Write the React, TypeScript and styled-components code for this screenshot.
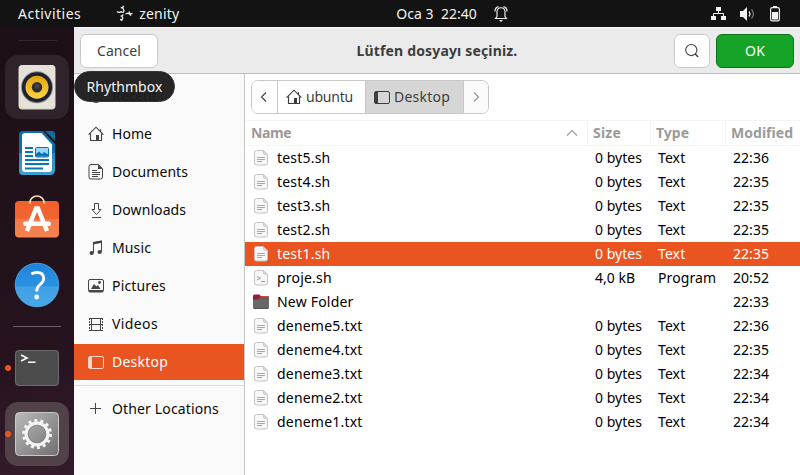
import React from 'react';
import styled, { createGlobalStyle, css } from 'styled-components';

const Global = createGlobalStyle`
  * { box-sizing: border-box; }
  body { margin: 0; overflow: hidden; background: #fff; }
  svg { display: block; flex: none; overflow: visible; }
  button { font: inherit; color: inherit; padding: 0; }
`;

const Screen = styled.div`
  position: relative;
  width: 800px;
  height: 475px;
  display: flex;
  flex-direction: column;
  overflow: hidden;
  font: 400 14px/20px 'Noto Sans', 'Open Sans', sans-serif;
  color: #000;
`;

const Label = styled.span<{ $track?: number }>`
  letter-spacing: ${(p) => p.$track ?? 0}px;
  white-space: pre;
`;

const TopBar = styled.header`
  height: 27px;
  flex: none;
  display: flex;
  align-items: center;
  background: #131313;
  color: #f2f2f2;
  padding: 0 20px 0 18px;
`;
const AppMenu = styled.div`
  display: flex;
  align-items: center;
  gap: 6px;
  margin-left: 35px;
`;
const Clock = styled.div`
  display: flex;
  align-items: center;
  gap: 17px;
  margin-left: 217px;
`;
const Tray = styled.div`
  display: flex;
  align-items: center;
  gap: 14px;
  margin-left: auto;
`;

const Body = styled.div`
  flex: 1;
  display: flex;
  min-height: 0;
`;

const Dock = styled.nav`
  width: 74px;
  flex: none;
  display: flex;
  flex-direction: column;
  align-items: center;
  gap: 2px;
  background: linear-gradient(165deg, #1c0f17 0%, #22121c 50%, #26131f 72%, #351b2b 100%);
`;
const DockRule = styled.div<{ $faint?: boolean }>`
  width: ${(p) => (p.$faint ? 39 : 48)}px;
  height: 1px;
  flex: none;
  background: ${(p) => (p.$faint ? '#33262f' : '#6c6068')};
  margin: ${(p) => (p.$faint ? '13px 0 12px' : '7px 0 7px')};
`;
const DockTile = styled.div<{ $shade?: string }>`
  position: relative;
  width: 64px;
  height: 64px;
  flex: none;
  display: grid;
  place-items: center;
  border-radius: 13px;
  background: ${(p) => p.$shade ?? 'transparent'};
`;
const RunningDot = styled.i`
  position: absolute;
  left: 0;
  top: 29px;
  width: 6px;
  height: 6px;
  border-radius: 50%;
  background: #e95420;
`;

const Dialog = styled.main`
  flex: 1;
  display: flex;
  flex-direction: column;
  background: #fff;
`;
const TitleBar = styled.div`
  height: 47px;
  flex: none;
  display: grid;
  grid-template-columns: 1fr auto 1fr;
  align-items: center;
  padding: 0 6px;
  background: #ebebeb;
  border-top: 1px solid #fbfbfb;
  border-bottom: 1px solid #bdbdbd;
  color: #3d3d3d;
`;
const Title = styled.h1`
  margin: 0;
  font-size: 14px;
  line-height: 20px;
  font-weight: 700;
`;
const Actions = styled.div`
  display: flex;
  justify-content: flex-end;
  gap: 6px;
`;
const Button = styled.button<{ $width: number; $primary?: boolean }>`
  width: ${(p) => p.$width}px;
  height: 34px;
  display: flex;
  align-items: center;
  justify-content: center;
  border-radius: 6px;
  border: 1px solid #c9c9c9;
  background: #fff;
  ${(p) =>
    p.$primary &&
    css`
      border-color: #0d741c;
      background: #15a328;
      color: #fff;
    `}
`;

const Content = styled.div`
  flex: 1;
  display: flex;
  min-height: 0;
`;
const Sidebar = styled.aside`
  width: 171px;
  flex: none;
  display: flex;
  flex-direction: column;
  gap: 2px;
  padding-top: 4px;
  background: #fafafa;
  border-right: 1px solid #c6c6c6;
`;
const Place = styled.div<{ $active?: boolean }>`
  height: 36px;
  flex: none;
  display: flex;
  align-items: center;
  gap: 8px;
  padding-left: 14px;
  color: ${(p) => (p.$active ? '#fff' : '#0a0a0a')};
  background: ${(p) => (p.$active ? '#e95420' : 'transparent')};
  svg { color: ${(p) => (p.$active ? '#fbd6c9' : '#444')}; }
`;
const SidebarRule = styled.hr`
  width: 100%;
  height: 1px;
  border: 0;
  background: #dcdcdc;
  margin: 3px 0;
`;

const Browser = styled.section`
  flex: 1;
  min-width: 0;
  display: flex;
  flex-direction: column;
`;
const PathBar = styled.div`
  width: 238px;
  height: 34px;
  margin: 6px 0 6px 6px;
  flex: none;
  display: flex;
  border: 1px solid #c9c9c9;
  border-radius: 7px;
  overflow: hidden;
  color: #3d3d3d;
`;
const Crumb = styled.div<{ $width: number; $current?: boolean; $muted?: boolean }>`
  width: ${(p) => p.$width}px;
  flex: none;
  display: flex;
  align-items: center;
  padding-left: ${(p) => (p.$width > 30 ? 8 : 5)}px;
  gap: 4px;
  background: ${(p) => (p.$current ? '#d6d6d6' : p.$muted ? '#fafafa' : '#fff')};
  color: ${(p) => (p.$muted ? '#929292' : '#3d3d3d')};
  & + & { border-left: 1px solid #c9c9c9; }
`;

const Row = styled.div<{ $selected?: boolean }>`
  height: 24px;
  flex: none;
  display: grid;
  grid-template-columns: 342px 63px 75px 75px;
  align-items: center;
  color: ${(p) => (p.$selected ? '#fff' : '#000')};
  background: ${(p) => (p.$selected ? '#e95420' : 'transparent')};
`;
const HeadRow = styled(Row)`
  height: 26px;
  color: #9a9a9a;
  font-weight: 700;
  border-top: 1px solid #f4f4f4;
  border-bottom: 1px solid #f4f4f4;
`;
const HeadCell = styled.div`
  height: 24px;
  display: flex;
  align-items: center;
  justify-content: space-between;
  padding: 0 8px 0 6px;
  & + & {
    padding-left: 5px;
    border-left: 1px solid #f4f4f4;
  }
`;
const Cell = styled.div`
  display: flex;
  align-items: center;
  padding-left: 8px;
`;
const IconSlot = styled.span`
  width: 24px;
  flex: none;
`;

const Tooltip = styled.div`
  position: absolute;
  left: 74px;
  top: 71px;
  width: 101px;
  height: 31px;
  display: grid;
  place-items: center;
  border-radius: 16px;
  background: rgba(28, 28, 28, 0.96);
  border: 1px solid #353535;
  color: #f4f4f4;
`;

const line = { fill: 'none', stroke: 'currentColor', strokeWidth: 1 } as const;

const HomeIcon = () => (
  <svg width="16" height="16" viewBox="0 0 16 16">
    <path d="M.6 8.6 8 1.2l7.4 7.4M12.5 5.6V3.2M2.5 7.5v7h11v-7" {...line} strokeWidth={1.15} />
    <path d="M8 9h3v6H8z" fill="currentColor" />
  </svg>
);
const DesktopIcon = () => (
  <svg width="16" height="16" viewBox="0 0 16 16">
    <rect x=".5" y="2.5" width="15" height="12" rx="1.5" {...line} />
    <path d="M1 3h3v11H1z" fill="currentColor" />
  </svg>
);
const RecentIcon = () => (
  <svg width="16" height="16" viewBox="0 0 16 16">
    <circle cx="8" cy="8" r="6.5" {...line} />
    <path d="M8 4v4h3" {...line} />
  </svg>
);
const DocumentsIcon = () => (
  <svg width="16" height="16" viewBox="0 0 16 16">
    <path d="M3 .5h7.5l4 4V13a2 2 0 0 1-2 2H3a2 2 0 0 1-2-2V2.500A2 2 0 0 1 3 .5Z" {...line} />
    <path d="M10 .5 14.500 5H10zM4 6h5v1H4zM4 8h8v1H4zM4 10h8v1H4zM4 12h6v1H4z" fill="currentColor" />
  </svg>
);
const DownloadsIcon = () => (
  <svg width="16" height="16" viewBox="0 0 16 16">
    <path d="M6.500 1.500h4v6H13L8.500 12.500 4 7.500h2.500zM4 15.500h9" {...line} />
  </svg>
);
const MusicIcon = () => (
  <svg width="16" height="16" viewBox="0 0 16 16">
    <path d="M5.500 12.500V2.500l8-1.500v10.500" {...line} />
    <path d="M5 2.200 14 .5v2.300L5 4.500z" fill="currentColor" />
    <ellipse cx="3.700" cy="13" rx="2.200" ry="1.900" fill="currentColor" />
    <ellipse cx="11.700" cy="12" rx="2.200" ry="1.900" fill="currentColor" />
  </svg>
);
const PicturesIcon = () => (
  <svg width="16" height="16" viewBox="0 0 16 16">
    <rect x=".5" y="1.500" width="15" height="12.500" rx="1.500" {...line} />
    <path d="M1 12h14v2H1zM3 11l3-5 2.500 2.500L10 7l2.500 4z" fill="currentColor" />
    <circle cx="11.500" cy="4.500" r="1.400" fill="currentColor" />
  </svg>
);
const VideosIcon = () => (
  <svg width="16" height="16" viewBox="0 0 16 16">
    <path d="M1 2.500h14M1 8.500h14M1 14.500h14M3.500 2v13M12.500 2v13" {...line} />
    <path d="M1.500 2v13M14.500 2v13" {...line} strokeDasharray="2 1" />
  </svg>
);
const PlusIcon = () => (
  <svg width="16" height="16" viewBox="0 0 16 16">
    <path d="M7.500 2v11M2 7.500h11" {...line} />
  </svg>
);
const Chevron = ({ d }: { d: string }) => (
  <svg width="14" height="14" viewBox="0 0 14 14">
    <path d={d} {...line} strokeWidth={1.1} />
  </svg>
);

const TextFileIcon = () => (
  <svg width="16" height="16" viewBox="0 0 16 16">
    <path d="M3.500.5h6.500l4.500 4V13a2 2 0 0 1-2 2h-9a2 2 0 0 1-2-2V2.500a2 2 0 0 1 2-2Z" fill="#f8f8f8" stroke="#c2c2c2" />
    <path d="M10.500.8v2.400a1 1 0 0 0 1 1h2.700z" fill="#ddd" stroke="#bbb" strokeWidth=".7" />
    <path d="M4 7.500h8M4 9.500h8M4 11.500h5" stroke="#aaa" />
  </svg>
);
const ScriptFileIcon = () => (
  <svg width="16" height="16" viewBox="0 0 16 16">
    <path d="M3.500.5h6.500l4.500 4V13a2 2 0 0 1-2 2h-9a2 2 0 0 1-2-2V2.500a2 2 0 0 1 2-2Z" fill="#f8f8f8" stroke="#c2c2c2" />
    <path d="M10.500.8v2.400a1 1 0 0 0 1 1h2.700z" fill="#ddd" stroke="#bbb" strokeWidth=".7" />
    <path d="m4 6.500 3.500 1.700L4 10M8 11.500h4" fill="none" stroke="#999" />
  </svg>
);
const FolderIcon = () => (
  <svg width="16" height="16" viewBox="0 0 16 16">
    <path d="M0 3V2Q0 .5 1.500.5h4.700L8 2h6.500Q16 2 16 3.500V6H0z" fill="#8c2140" />
    <path d="M8 2h6.500Q16 2 16 3.500V5H6z" fill="#d5442a" />
    <path d="M0 5h5.500L7 3.800h9v9.700q0 1.500-1.500 1.500h-13Q0 15 0 13.500z" fill="#686868" />
    <path d="M.5 5.500H6L7.200 4.300H15.500M1 14.500h14" stroke="#525252" fill="none" />
  </svg>
);

const ZenityIcon = () => (
  <svg width="17" height="17" viewBox="0 0 17 17">
    <g fill="none" stroke="#eee" strokeWidth="1.300">
      <path d="M7.500.8 6.800 3 8 5.500 7.300 7.500" />
      <path d="M.8 6.500 3 7.500 5 6.800l2.300.7M4.800 2.500l2 .5" />
      <path d="M7.300 9.500 6 11l.8 2-1.300 3M4 14.500l2 .3M6 11l-1.500.2" />
      <path d="M9.500 9 12 8.200l1.800 1 2.700-.8M13 6.500l.8 2.500M15 10.500l-1.200-1.300" />
    </g>
  </svg>
);
const BellIcon = () => (
  <svg width="14" height="16" viewBox="0 0 14 16">
    <path d="M1.500 12.500h11L11 10.500V6c0-2.500-1.500-4.300-4-4.300S3 3.500 3 6v4.500zM1 5.500C1 3 2.500 1 4.500.6M13 5.500C13 3 11.500 1 9.500.6" fill="none" stroke="#eee" strokeWidth="1.150" />
    <path d="M5 14h4l-2 2z" fill="#eee" />
  </svg>
);
const NetworkIcon = () => (
  <svg width="15" height="14" viewBox="0 0 15 14">
    <path d="M5 0h5v4H5zM0 9h5v4H0zM10 9h5v4h-5z" fill="#f2f2f2" />
    <path d="M7.500 4v3M2.500 9V6.500h10V9" fill="none" stroke="#f2f2f2" />
  </svg>
);
const VolumeIcon = () => (
  <svg width="16" height="14" viewBox="0 0 16 14">
    <path d="M0 4h3l4-4v14l-4-4H0z" fill="#f2f2f2" />
    <path d="M9 4.500q2 2.500 0 5" fill="none" stroke="#ddd" strokeWidth="1.300" />
    <path d="M11.500 2.500q4 4.500 0 9" fill="none" stroke="#777" strokeWidth="1.300" />
  </svg>
);
const BatteryIcon = () => (
  <svg width="10" height="16" viewBox="0 0 10 16">
    <path d="M3 0h4v2H3z" fill="#f2f2f2" />
    <rect x=".6" y="1.600" width="8.800" height="13.300" rx="1.600" fill="none" stroke="#f2f2f2" strokeWidth="1.200" />
    <path d="M2 6h6v7.500H2z" fill="#f2f2f2" />
  </svg>
);
const SearchIcon = () => (
  <svg width="16" height="16" viewBox="0 0 16 16">
    <circle cx="7.300" cy="7" r="5.600" {...line} strokeWidth={1.050} />
    <path d="m11 10.700 3.200 3.200" {...line} strokeWidth={1.400} />
  </svg>
);

const RhythmboxLogo = () => (
  <svg width="38" height="46" viewBox="0 0 38 46">
    <defs>
      <linearGradient id="cone" x2="0" y2="1">
        <stop offset="0" stopColor="#dfa50c" />
        <stop offset="1" stopColor="#ffd344" />
      </linearGradient>
    </defs>
    <rect x=".5" y="1" width="37" height="44.500" rx="4" fill="#d9d5c8" />
    <rect x="1" y="1" width="36" height="43" rx="4" fill="#e6e2d7" />
    <circle cx="19" cy="23.200" r="16" fill="#85858c" />
    <circle cx="19" cy="23.200" r="15" fill="#1d2030" />
    <circle cx="19" cy="23.200" r="11.500" fill="url(#cone)" />
    <circle cx="19" cy="23.200" r="5.200" fill="#2c2c2c" />
    <circle cx="19" cy="22.200" r="2.500" fill="#444" />
  </svg>
);
const WriterLogo = () => (
  <svg width="38" height="46" viewBox="0 0 38 46">
    <defs>
      <linearGradient id="frame" x2="0" y2="1">
        <stop offset=".49" stopColor="#0b6fa8" />
        <stop offset=".5" stopColor="#2589bd" />
        <stop offset="1" stopColor="#3da0cf" />
      </linearGradient>
    </defs>
    <path d="M5 1h20l12 13v26q0 5-5 5H5q-4 0-4-4V5q0-4 4-4Z" fill="url(#frame)" />
    <path d="M27 1h7q3 0 3 3v7z" fill="#116d9f" />
    <path d="M7 3h16.500L34 14.500V39q0 3-3 3H7q-3 0-3-3V6q0-3 3-3Z" fill="#fff" />
    <path d="M7 18h8M7 22h8M7 26h8M7 30h24M7 34h24M7 38.500h18" stroke="#0876b5" strokeWidth="2" />
    <rect x="17.500" y="17.500" width="13" height="9.500" rx="1" fill="#9bd8f7" stroke="#0876b5" />
    <path d="M18 26.500v-2.500l3-2.500 3 2.500 2-2 4.500 2.500v2z" fill="#0876b5" />
  </svg>
);
const SoftwareLogo = () => (
  <svg width="46" height="46" viewBox="0 0 46 46">
    <defs>
      <linearGradient id="bag" x2="0" y2="1">
        <stop offset="0" stopColor="#f2602b" />
        <stop offset=".49" stopColor="#f06530" />
        <stop offset=".5" stopColor="#f27a4c" />
        <stop offset="1" stopColor="#f5824f" />
      </linearGradient>
    </defs>
    <rect x="1" y="5" width="44" height="36.500" rx="4" fill="url(#bag)" />
    <path d="M16 8V6.500a7 6.500 0 0 1 14 0V8" fill="none" stroke="#f9dca7" strokeWidth="1.600" />
    <path d="M13 35 22 12.500h2L33 35" fill="none" stroke="#fff" strokeWidth="4.500" />
    <rect x="9" y="25.500" width="28" height="4.500" rx="2.200" fill="#fff" />
  </svg>
);
const HelpLogo = () => (
  <svg width="46" height="46" viewBox="0 0 46 46">
    <defs>
      <linearGradient id="disc" x2="0" y2="1">
        <stop offset="0" stopColor="#1e83dc" />
        <stop offset=".53" stopColor="#2b92e2" />
        <stop offset=".54" stopColor="#42a0e5" />
        <stop offset="1" stopColor="#47a7e8" />
      </linearGradient>
    </defs>
    <circle cx="23" cy="23" r="21.800" fill="url(#disc)" stroke="#58afe9" strokeWidth=".8" />
    <path d="M17.300 12q2.500-1.500 5.700-1.500 6.700 0 6.700 6 0 3-3.500 5.800-3.500 3-3.500 7.200" fill="none" stroke="#fff" strokeWidth="2.800" />
    <circle cx="22.700" cy="35" r="2.400" fill="#fff" />
  </svg>
);
const TerminalLogo = () => (
  <svg width="46" height="38" viewBox="0 0 46 38">
    <rect x="1" y="1" width="44" height="36" rx="4" fill="#4c4c4c" />
    <rect x="1.500" y="1.500" width="43" height="35" rx="3.500" fill="none" stroke="#737373" strokeWidth=".8" />
    <path d="m7 6 6 3-6 3M14 13.200h7.500" fill="none" stroke="#fff" strokeWidth="1.600" />
  </svg>
);
const SettingsLogo = () => (
  <svg width="46" height="46" viewBox="0 0 46 46">
    <defs>
      <linearGradient id="plate" x2="1" y2="1">
        <stop offset="0" stopColor="#bababa" />
        <stop offset="1" stopColor="#707070" />
      </linearGradient>
    </defs>
    <rect x="1.500" y="1.500" width="43" height="43" rx="4" fill="url(#plate)" stroke="#c9c9c9" />
    <circle cx="23" cy="23" r="13" fill="none" stroke="#f5f4f2" strokeWidth="4" strokeDasharray="2.800 3.034" />
    <circle cx="23" cy="23" r="10.800" fill="none" stroke="#f5f4f2" strokeWidth="3.400" />
    <circle cx="23" cy="23" r="8.900" fill="none" stroke="#777" strokeWidth=".7" />
  </svg>
);

const places = [
  { name: 'Recent', icon: <RecentIcon />, track: 0 },
  { name: 'Home', icon: <HomeIcon />, track: 0.04 },
  { name: 'Documents', icon: <DocumentsIcon />, track: 0.06 },
  { name: 'Downloads', icon: <DownloadsIcon />, track: 0.08 },
  { name: 'Music', icon: <MusicIcon />, track: 0.12 },
  { name: 'Pictures', icon: <PicturesIcon />, track: 0.17 },
  { name: 'Videos', icon: <VideosIcon />, track: 0.38 },
  { name: 'Desktop', icon: <DesktopIcon />, track: 0.22, active: true },
];

type FileKind = 'text' | 'script' | 'folder';
const files: { name: string; kind: FileKind; size: string; type: string; time: string; selected?: boolean }[] = [
  { name: 'test5.sh', kind: 'text', size: '0 bytes', type: 'Text', time: '22:36' },
  { name: 'test4.sh', kind: 'text', size: '0 bytes', type: 'Text', time: '22:35' },
  { name: 'test3.sh', kind: 'text', size: '0 bytes', type: 'Text', time: '22:35' },
  { name: 'test2.sh', kind: 'text', size: '0 bytes', type: 'Text', time: '22:35' },
  { name: 'test1.sh', kind: 'text', size: '0 bytes', type: 'Text', time: '22:35', selected: true },
  { name: 'proje.sh', kind: 'script', size: '4,0 kB', type: 'Program', time: '20:52' },
  { name: 'New Folder', kind: 'folder', size: '', type: '', time: '22:33' },
  { name: 'deneme5.txt', kind: 'text', size: '0 bytes', type: 'Text', time: '22:36' },
  { name: 'deneme4.txt', kind: 'text', size: '0 bytes', type: 'Text', time: '22:35' },
  { name: 'deneme3.txt', kind: 'text', size: '0 bytes', type: 'Text', time: '22:34' },
  { name: 'deneme2.txt', kind: 'text', size: '0 bytes', type: 'Text', time: '22:34' },
  { name: 'deneme1.txt', kind: 'text', size: '0 bytes', type: 'Text', time: '22:34' },
];
const fileIcons = { text: <TextFileIcon />, script: <ScriptFileIcon />, folder: <FolderIcon /> };

export default function App() {
  return (
    <Screen>
      <Global />
      <TopBar>
        <Label $track={0.5}>Activities</Label>
        <AppMenu>
          <ZenityIcon />
          <Label $track={0.16}>zenity</Label>
        </AppMenu>
        <Clock>
          <Label $track={0.03}>{'Oca 3  22:40'}</Label>
          <BellIcon />
        </Clock>
        <Tray>
          <NetworkIcon />
          <VolumeIcon />
          <BatteryIcon />
        </Tray>
      </TopBar>

      <Body>
        <Dock>
          <DockRule $faint />
          <DockTile $shade="#30242c"><RhythmboxLogo /></DockTile>
          <DockTile><WriterLogo /></DockTile>
          <DockTile><SoftwareLogo /></DockTile>
          <DockTile><HelpLogo /></DockTile>
          <DockRule />
          <DockTile><RunningDot /><TerminalLogo /></DockTile>
          <DockTile $shade="#514149"><RunningDot /><SettingsLogo /></DockTile>
        </Dock>

        <Dialog>
          <TitleBar>
            <Button $width={78}><Label $track={0.07}>Cancel</Label></Button>
            <Title><Label $track={0.16}>Lütfen dosyayı seçiniz.</Label></Title>
            <Actions>
              <Button $width={36} aria-label="Search"><SearchIcon /></Button>
              <Button $width={78} $primary><Label $track={0.2}>OK</Label></Button>
            </Actions>
          </TitleBar>

          <Content>
            <Sidebar>
              {places.map((p) => (
                <Place key={p.name} $active={p.active}>
                  {p.icon}
                  <Label $track={p.track}>{p.name}</Label>
                </Place>
              ))}
              <SidebarRule />
              <Place>
                <PlusIcon />
                <Label $track={0.14}>Other Locations</Label>
              </Place>
            </Sidebar>

            <Browser>
              <PathBar>
                <Crumb $width={25}><Chevron d="M9 2.500 4.500 7 9 11.500" /></Crumb>
                <Crumb $width={88}><HomeIcon /><Label $track={-0.2}>ubuntu</Label></Crumb>
                <Crumb $width={98} $current><DesktopIcon /><Label $track={0.22}>Desktop</Label></Crumb>
                <Crumb $width={25} $muted><Chevron d="M5 2.500 9.500 7 5 11.500" /></Crumb>
              </PathBar>
              <HeadRow>
                <HeadCell>
                  <Label $track={-0.4}>Name</Label>
                  <Chevron d="M2 9.500 7 4.500l5 5" />
                </HeadCell>
                <HeadCell><Label $track={0.21}>Size</Label></HeadCell>
                <HeadCell><Label>Type</Label></HeadCell>
                <HeadCell><Label $track={0.03}>Modified</Label></HeadCell>
              </HeadRow>
              {files.map((f) => (
                <Row key={f.name} $selected={f.selected}>
                  <Cell>
                    <IconSlot>{fileIcons[f.kind]}</IconSlot>
                    <Label $track={0.2}>{f.name}</Label>
                  </Cell>
                  <Cell><Label $track={0.03}>{f.size}</Label></Cell>
                  <Cell><Label $track={0.1}>{f.type}</Label></Cell>
                  <Cell><Label $track={0.04}>{f.time}</Label></Cell>
                </Row>
              ))}
            </Browser>
          </Content>
        </Dialog>
      </Body>
      <Tooltip><Label $track={0.06}>Rhythmbox</Label></Tooltip>
    </Screen>
  );
}
